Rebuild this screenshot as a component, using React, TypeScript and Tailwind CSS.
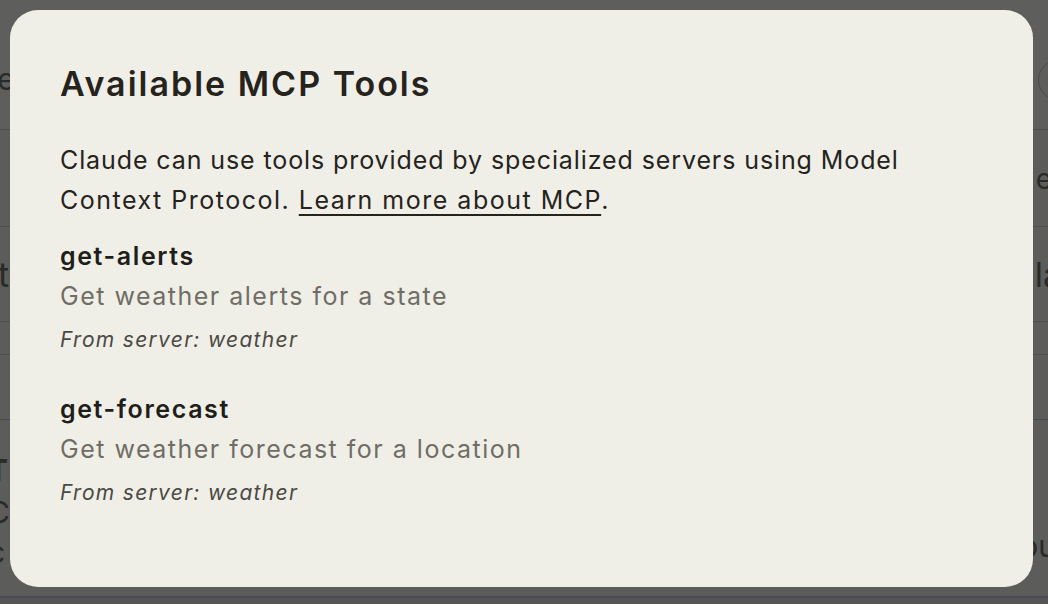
import React from "react";

const font = { fontFamily: "Inter, 'Noto Sans', sans-serif" };

function Tool({ name, desc }: { name: string; desc: string }) {
  return (
    <div className="flex flex-col">
      <div className="text-[25px] leading-[40px] font-semibold tracking-[1.6px] text-[#1f1e19]">{name}</div>
      <div className="text-[25px] leading-[40px] tracking-[1.5px] text-[#6f6d66]">{desc}</div>
      <div className="text-[21px] leading-[48px] italic tracking-[1.3px] text-[#4b4944]">From server: weather</div>
    </div>
  );
}

export default function App() {
  return (
    <div className="relative w-[1048px] h-[604px] overflow-hidden bg-[#5c5c5a]" style={font}>
      {/* dimmed background page */}
      <div className="flex flex-col h-full text-[#2a2a28]">
        <div className="h-[130px] border-b border-[#4e4e4c] bg-[#5e5e5c] flex items-center justify-between">
          <span className="text-[30px] -ml-[10px] mt-[30px]">le</span>
          <div className="w-[40px] h-[40px] rounded-full border border-[#4a4a48] mr-[-30px] mt-[30px]"></div>
        </div>
        <div className="h-[97px] border-b border-[#4e4e4c] flex items-center justify-end">
          <span className="text-[28px] mr-[-4px] mt-[2px]">e</span>
        </div>
        <div className="h-[95px] border-b border-[#4e4e4c] flex items-center justify-between">
          <span className="text-[34px] -ml-[2px]">t</span>
          <span className="text-[34px] mr-[-14px]">ula</span>
        </div>
        <div className="h-[33px] border-b border-[#4e4e4c]"></div>
        <div className="h-[65px] border-b border-[#4a4a55]"></div>
        <div className="flex-1 flex justify-between pt-[30px]">
          <div className="flex flex-col -ml-[12px]">
            <span className="text-[30px] font-bold leading-[40px]">T</span>
            <span className="text-[30px] leading-[44px]">C</span>
            <span className="text-[30px] leading-[36px]">c</span>
          </div>
          <span className="text-[30px] mr-[-8px] mt-[74px]">ou</span>
        </div>
        <div className="h-[8px] border-t-2 border-[#4a4a55] bg-[#555553]"></div>
      </div>

      {/* modal */}
      <div className="absolute left-[10px] top-[10px] w-[1023px] h-[577px] rounded-[28px] bg-[#f0efe7] px-[50px] pt-[54px]">
        <h2 className="text-[34px] leading-[40px] font-semibold text-[#25231c] tracking-[2px]">Available MCP Tools</h2>
        <p className="mt-[36px] text-[25px] leading-[40px] tracking-[0.9px] text-[#25231c]">
          Claude can use tools provided by specialized servers using Model
          <br />
          <span className="tracking-[1.5px]">
            Context Protocol.{" "}
            <span className="underline underline-offset-[5px] decoration-[2px]">Learn more about MCP</span>.
          </span>
        </p>
        <div className="mt-[16px] flex flex-col gap-[25px]">
          <Tool name="get-alerts" desc="Get weather alerts for a state" />
          <Tool name="get-forecast" desc="Get weather forecast for a location" />
        </div>
      </div>
    </div>
  );
}
